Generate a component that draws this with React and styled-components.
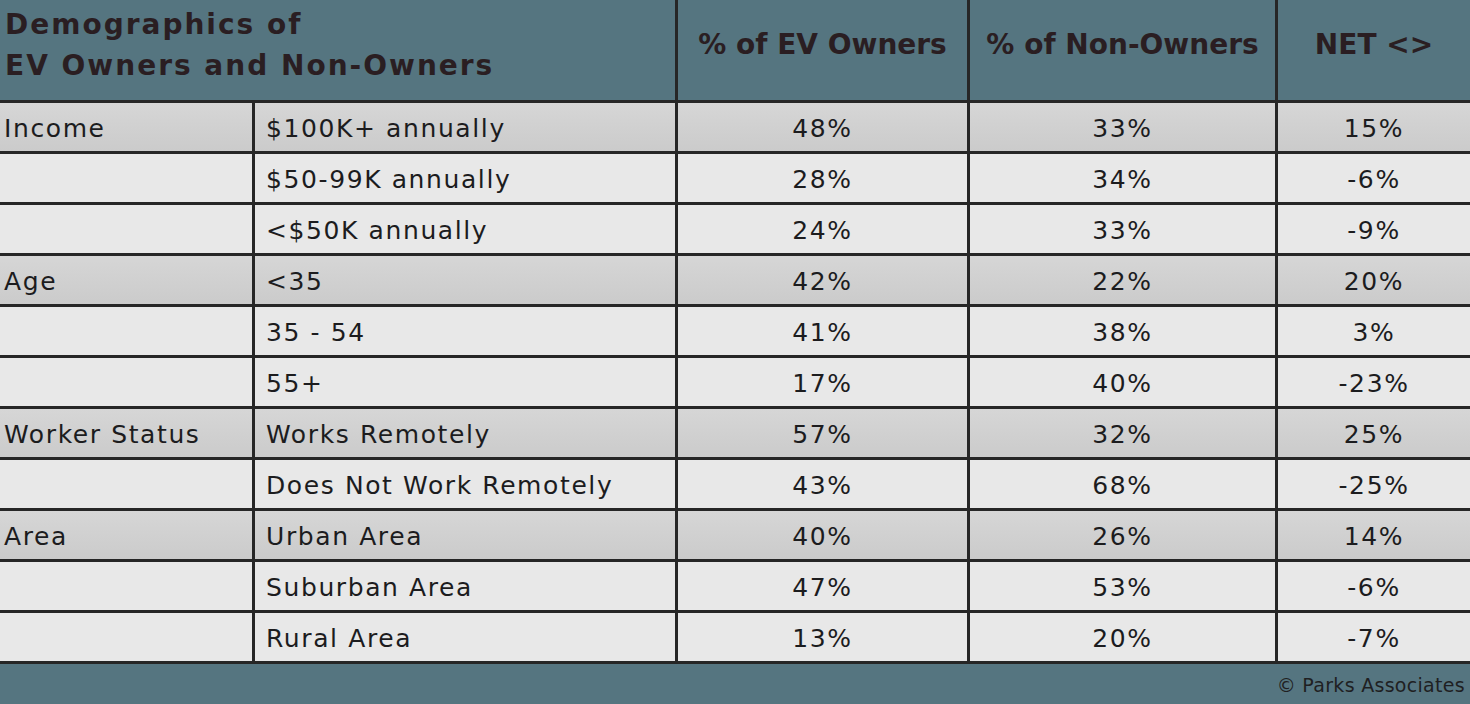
import React from "react";
import styled, { createGlobalStyle } from "styled-components";

const GlobalStyle = createGlobalStyle`
  html, body {
    margin: 0;
    padding: 0;
    background: #557580;
  }
  body {
    font-family: "DejaVu Sans", "Noto Sans", sans-serif;
  }
`;

const groups = [
  {
    label: "Income",
    rows: [
      ["$100K+ annually", "48%", "33%", "15%"],
      ["$50-99K annually", "28%", "34%", "-6%"],
      ["<$50K annually", "24%", "33%", "-9%"],
    ],
  },
  {
    label: "Age",
    rows: [
      ["<35", "42%", "22%", "20%"],
      ["35 - 54", "41%", "38%", "3%"],
      ["55+", "17%", "40%", "-23%"],
    ],
  },
  {
    label: "Worker Status",
    rows: [
      ["Works Remotely", "57%", "32%", "25%"],
      ["Does Not Work Remotely", "43%", "68%", "-25%"],
    ],
  },
  {
    label: "Area",
    rows: [
      ["Urban Area", "40%", "26%", "14%"],
      ["Suburban Area", "47%", "53%", "-6%"],
      ["Rural Area", "13%", "20%", "-7%"],
    ],
  },
];

const App = () => {
  return (
    <Page>
      <GlobalStyle />
      <Table>
        <Title>
          Demographics of
          <br />
          EV Owners and Non-Owners
        </Title>
        <HeadCell>% of EV Owners</HeadCell>
        <HeadCell>% of Non-Owners</HeadCell>
        <HeadCell>NET &lt;&gt;</HeadCell>

        {groups.map((g) =>
          g.rows.map((r, i) => (
            <React.Fragment key={g.label + r[0]}>
              <Cell $shade={i === 0} $pad="4px">
                {i === 0 ? g.label : ""}
              </Cell>
              <Cell $shade={i === 0} $pad="11px">
                {r[0]}
              </Cell>
              <Cell $shade={i === 0} $center>
                {r[1]}
              </Cell>
              <Cell $shade={i === 0} $center>
                {r[2]}
              </Cell>
              <Cell $shade={i === 0} $center>
                {r[3]}
              </Cell>
            </React.Fragment>
          ))
        )}
      </Table>
      <Footer>© Parks Associates</Footer>
    </Page>
  );
};

const Page = styled.div`
  width: 1470px;
  height: 704px;
  background: #557580;
  display: flex;
  flex-direction: column;
  overflow: hidden;
`;

const Table = styled.div`
  display: grid;
  grid-template-columns: 252px 420px 289px 305px 1fr;
  grid-template-rows: 100px repeat(11, 48px);
  gap: 3px;
  background: #262626;
  padding-bottom: 3px;
`;

const Title = styled.div`
  grid-column: 1 / span 2;
  background: #557580;
  color: #2a1e22;
  font-size: 28px;
  font-weight: 700;
  line-height: 41px;
  padding: 4px 0 0 5px;
  letter-spacing: 2px;
`;

const HeadCell = styled.div`
  background: #557580;
  color: #2a1e22;
  font-size: 28px;
  font-weight: 700;
  text-align: center;
  padding-top: 26px;
  line-height: 38px;
`;

const Cell = styled.div`
  background: ${(p) =>
    p.$shade
      ? "linear-gradient(180deg, #d6d6d6 0%, #cbcbcb 100%)"
      : "#e8e8e8"};
  color: #1c1c1e;
  font-size: 25px;
  letter-spacing: 1.6px;
  display: flex;
  align-items: center;
  justify-content: ${(p) => (p.$center ? "center" : "flex-start")};
  padding-left: ${(p) => p.$pad || "0"};
  padding-top: 2px;
  white-space: nowrap;
`;

const Footer = styled.div`
  flex: 1;
  display: flex;
  align-items: center;
  justify-content: flex-end;
  padding: 2px 5px 0 0;
  color: #1f1f22;
  font-size: 19px;
  letter-spacing: 0.3px;
`;

export default App;
